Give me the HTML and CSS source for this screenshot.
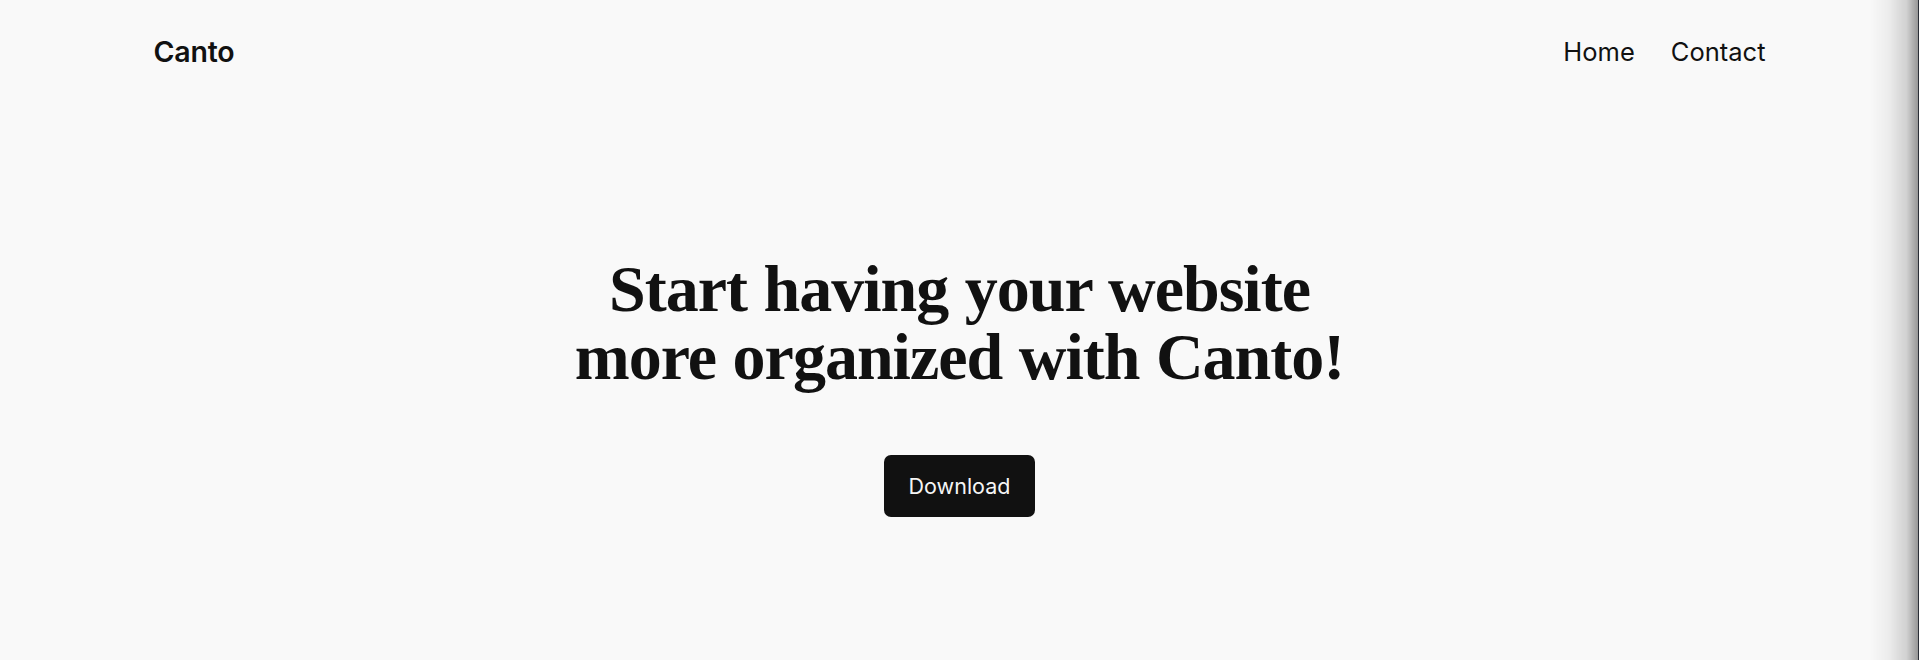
FILE: index.html
```html
<!DOCTYPE html>
<html lang="en">
<head>
<meta charset="utf-8">
<title>Canto</title>
<link rel="stylesheet" href="styles.css">
</head>
<body>
<header class="site-header">
  <a class="logo" href="#">Canto</a>
  <nav class="nav">
    <a href="#">Home</a>
    <a href="#">Contact</a>
  </nav>
</header>
<main class="hero">
  <h1 class="hero-title">Start having your website<br>more organized with Canto!</h1>
  <a class="btn" href="#">Download</a>
</main>
<div class="edge-shadow"></div>
</body>
</html>
```
FILE: styles.css
```css
* { box-sizing: border-box; }
html, body { margin: 0; padding: 0; }
body {
  background: #f9f9f9;
  color: #111111;
  font-family: Inter, "Noto Sans", sans-serif;
  min-height: 660px;
  overflow: hidden;
}
a { color: inherit; text-decoration: none; }
.site-header {
  display: flex;
  justify-content: space-between;
  align-items: center;
  height: 102px;
  padding: 0 8%;
}
.logo {
  font-size: 28.5px;
  font-weight: 600;
  letter-spacing: -0.2px;
}
.nav {
  display: flex;
  gap: 36px;
  font-size: 25.5px;
}
.hero {
  display: flex;
  flex-direction: column;
  align-items: center;
  padding-top: 153px;
}
.hero-title {
  margin: 0;
  font-family: "Liberation Serif", serif;
  font-weight: 700;
  font-size: 66px;
  line-height: 68px;
  letter-spacing: -1px;
  word-spacing: 1px;
  text-align: center;
}
.btn {
  margin-top: 64px;
  background: #111111;
  color: #f5f5f5;
  font-size: 21.5px;
  line-height: 24px;
  padding: 19px 25px;
  border-radius: 7px;
}
.edge-shadow {
  position: fixed;
  top: 0;
  right: 0;
  width: 50px;
  height: 100%;
  background: linear-gradient(to right, rgba(0,0,0,0) 0%, rgba(0,0,0,0.05) 40%, rgba(0,0,0,0.16) 75%, rgba(0,0,0,0.38) 97%, #2a2e36 97%);
  pointer-events: none;
}
```
